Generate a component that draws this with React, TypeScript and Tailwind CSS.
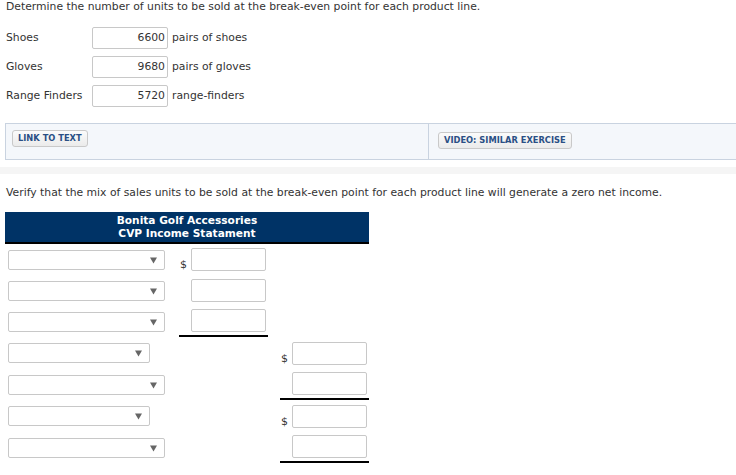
import React from "react";

const font = { fontFamily: '"DejaVu Sans", Verdana, sans-serif' };

function Select({ narrow }: { narrow?: boolean }) {
  return (
    <div
      className={`relative h-[20px] rounded-[2px] border border-[#c8c8c8] bg-white ${narrow ? "w-[142px]" : "w-[157px]"}`}
    >
      <svg className="absolute right-[7px] top-[6px]" width="7" height="7" viewBox="0 0 7 7">
        <path d="M0 0.5 H7 L3.5 6.5 Z" fill="#666" />
      </svg>
    </div>
  );
}

function Box() {
  return <div className="h-[23px] w-[75px] rounded-[2px] border border-[#c8c8c8] bg-white" />;
}

function Cell({ dollar, line, show }: { dollar?: boolean; line?: boolean; show: boolean }) {
  return (
    <div className={`flex h-full w-[89px] items-center justify-end pr-[2px] ${line ? "border-b-2 border-black" : ""}`}>
      {show && (
        <div className="flex items-end">
          <span className="mr-[1px] w-[10px] text-[11px] leading-[12px] text-[#333]">{dollar ? "$" : ""}</span>
          <Box />
        </div>
      )}
    </div>
  );
}

export default function App() {
  const rows: { narrow?: boolean; col: 1 | 2; dollar?: boolean; line?: boolean; h: string }[] = [
    { col: 1, dollar: true, h: "h-[31px]" },
    { col: 1, h: "h-[31px]" },
    { col: 1, line: true, h: "h-[31px]" },
    { col: 2, dollar: true, narrow: true, h: "h-[32px]" },
    { col: 2, line: true, h: "h-[31px]" },
    { col: 2, dollar: true, narrow: true, h: "h-[32px]" },
    { col: 2, line: true, h: "h-[31px]" },
  ];
  return (
    <div className="h-[475px] w-[736px] overflow-hidden bg-white text-[10.8px] text-[#333]" style={font}>
      <div className="px-[6px] pt-[0px] leading-[13px]">
        Determine the number of units to be sold at the break-even point for each product line.
      </div>

      <div className="mt-[14px] flex flex-col gap-[7px] pl-[6px]">
        {[
          ["Shoes", "6600", "pairs of shoes"],
          ["Gloves", "9680", "pairs of gloves"],
          ["Range Finders", "5720", "range-finders"],
        ].map(([label, val, unit]) => (
          <div key={label} className="flex h-[22px] items-center">
            <div className="w-[86px]">{label}</div>
            <div className="flex h-[22px] w-[76px] items-end justify-end rounded-[2px] border border-[#c8c8c8] bg-white pb-[2px] pr-[2px]">
              {val}
            </div>
            <div className="ml-[4px]">{unit}</div>
          </div>
        ))}
      </div>

      <div className="ml-[5px] mt-[16px] flex h-[37px] border-y border-l border-[#c9d3e0] bg-[#f4f7fb]">
        <div className="w-[423px] border-r border-[#c9d3e0] pl-[6px] pt-[6px]">
          <div className="inline-flex h-[17px] items-center rounded-[3px] border border-[#c9c9c9] bg-gradient-to-b from-[#fbfbfb] to-[#ebebeb] px-[5px] text-[8.3px] font-bold text-[#2a4f85]">
            LINK TO TEXT
          </div>
        </div>
        <div className="pl-[9px] pt-[8px]">
          <div className="inline-flex h-[17px] items-center rounded-[3px] border border-[#c9c9c9] bg-gradient-to-b from-[#fbfbfb] to-[#ebebeb] px-[5px] text-[8.3px] font-bold text-[#2a4f85]">
            VIDEO: SIMILAR EXERCISE
          </div>
        </div>
      </div>

      <div className="mt-[7px] h-[7px] bg-[#f5f5f5]" />

      <div className="mt-[12px] px-[6px] leading-[13px]">
        Verify that the mix of sales units to be sold at the break-even point for each product line will generate a zero net income.
      </div>

      <div className="ml-[5px] mt-[13px] w-[364px]">
        <div className="flex h-[32px] flex-col items-center justify-center border-b-2 border-black bg-[#003366] text-[10.6px] font-bold leading-[13px] text-white">
          <div>Bonita Golf Accessories</div>
          <div>CVP Income Statament</div>
        </div>
        <div>
          {rows.map((r, i) => (
            <div key={i} className={`flex ${r.h}`}>
              <div className="flex w-[174px] items-center pl-[3px]">
                <Select narrow={r.narrow} />
              </div>
              <Cell show={r.col === 1} dollar={r.dollar} line={r.line && r.col === 1} />
              <div className="w-[12px]" />
              <Cell show={r.col === 2} dollar={r.dollar} line={r.line && r.col === 2} />
            </div>
          ))}
        </div>
      </div>
    </div>
  );
}
